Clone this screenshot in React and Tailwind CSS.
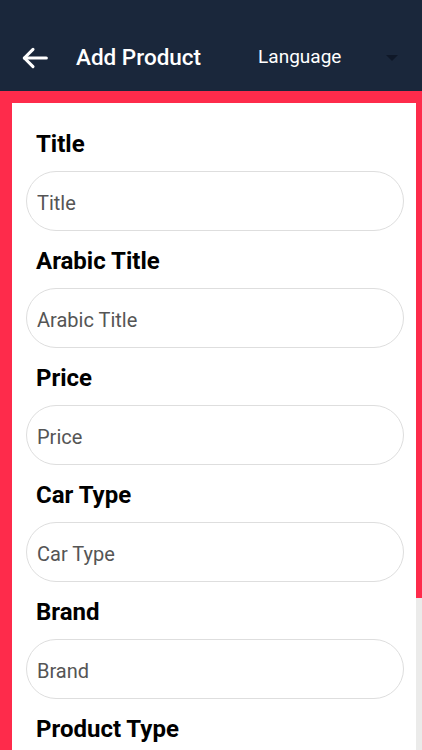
const fields = ['Title', 'Arabic Title', 'Price', 'Car Type', 'Brand', 'Product Type'];

function BackArrow() {
  return (
    <svg width="32" height="32" viewBox="0 0 24 24" fill="none" stroke="white" strokeWidth="2.3" strokeLinecap="round" strokeLinejoin="round">
      <path d="M20.5 12H4" />
      <path d="M10.5 5.5L4 12l6.5 6.5" />
    </svg>
  );
}

export default function App() {
  return (
    <div className="w-[422px] h-[750px] overflow-hidden flex flex-col bg-white" style={{ fontFamily: 'Roboto, "Liberation Sans", sans-serif' }}>
      <header className="h-[91px] shrink-0 bg-[#1a273b] flex items-center pt-[24px] pl-[19px] pr-[24px]">
        <BackArrow />
        <h1 className="ml-[25px] text-[22.5px] font-medium text-white">Add Product</h1>
        <span className="ml-[57px] text-[19px] text-white">Language</span>
        <span className="ml-auto w-0 h-0 border-l-[6px] border-r-[6px] border-t-[6px] border-l-transparent border-r-transparent border-t-[#0f1828]"></span>
      </header>

      <div className="flex-1 flex min-h-0">
        <div className="w-[12px] bg-[#fe2b4b]"></div>
        <div className="flex-1 flex flex-col min-h-0">
          <div className="h-[12px] bg-[#fe2b4b] shrink-0"></div>
          <div className="flex-1 flex min-h-0">
            <main className="w-[404px] bg-white pt-[27px] pl-[14px] pr-[12px] flex flex-col">
              {fields.map((f) => (
                <div key={f} className="mb-[16px]">
                  <label className="block ml-[10px] text-[24px] leading-[28px] font-bold text-black">{f}</label>
                  {f !== 'Product Type' && (
                    <input
                      placeholder={f}
                      className="mt-[13px] w-full h-[60px] rounded-full border border-[#dedede] px-[10px] pt-[3px] text-[20px] text-[#444] placeholder:text-[#555] outline-none"
                    />
                  )}
                </div>
              ))}
            </main>
            <div className="flex-1 flex flex-col">
              <div className="h-[495px] bg-[#fe2b4b]"></div>
              <div className="flex-1 bg-[#ebebea]"></div>
            </div>
          </div>
        </div>
      </div>
    </div>
  );
}
